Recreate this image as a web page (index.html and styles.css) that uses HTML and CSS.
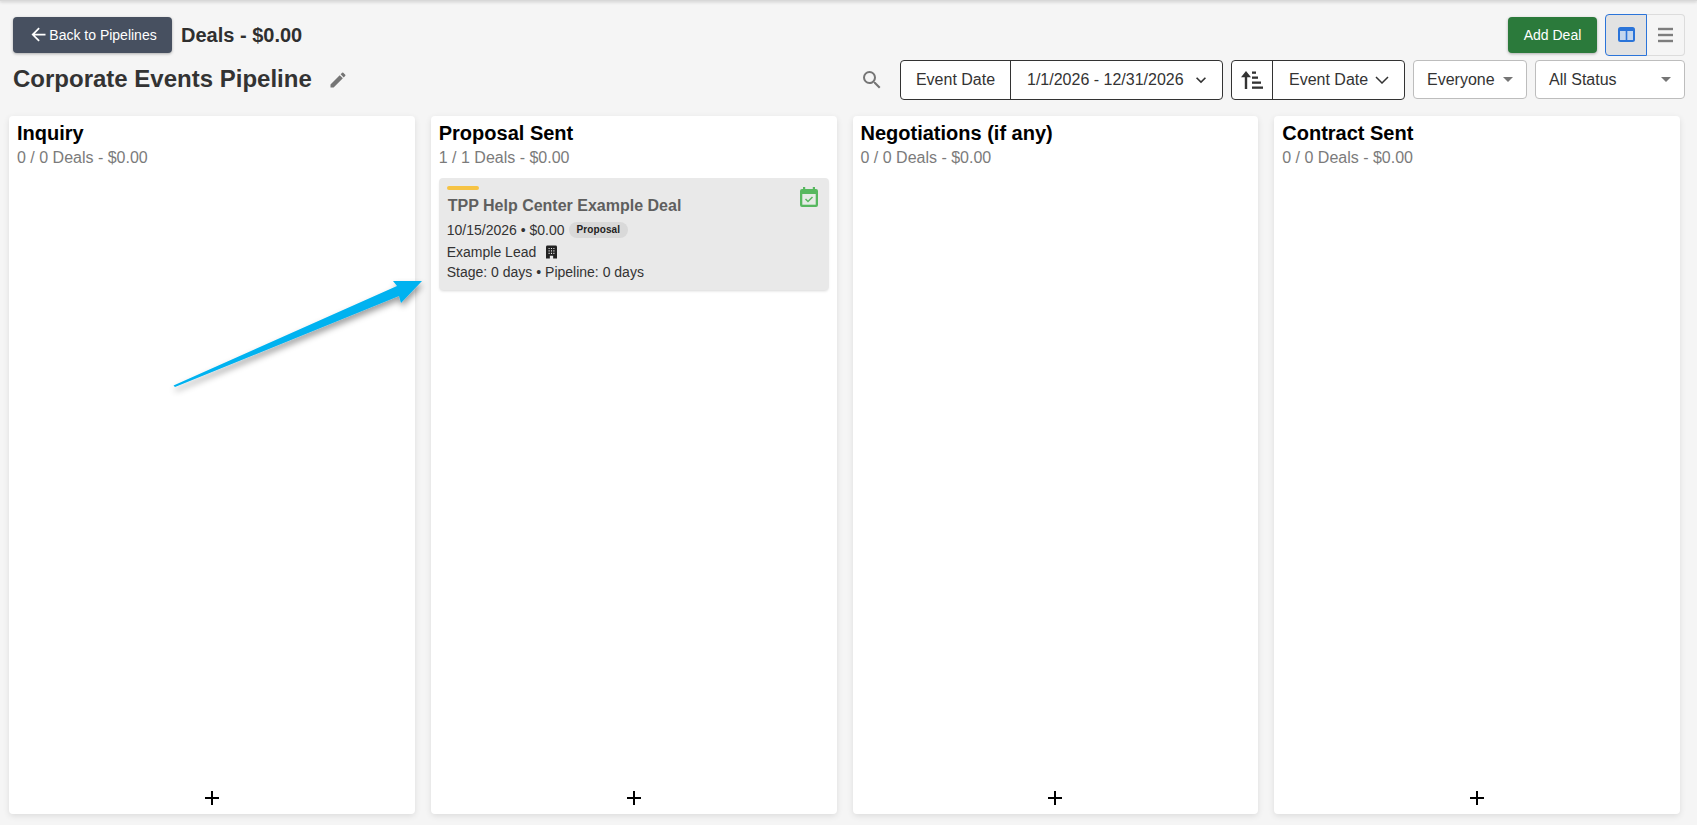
FILE: index.html
```html
<!DOCTYPE html>
<html lang="en">
<head>
<meta charset="utf-8">
<title>Corporate Events Pipeline</title>
<link rel="stylesheet" href="styles.css">
</head>
<body>
<div class="topline"></div>
<header class="header">
  <div class="row row-one">
    <button class="back-btn"><svg class="back-icon" viewBox="0 0 24 24"><path d="M20 11H7.83l5.59-5.59L12 4l-8 8 8 8 1.41-1.41L7.83 13H20v-2z"/></svg>Back to Pipelines</button>
    <span class="deals-total">Deals - $0.00</span>
    <div class="spacer"></div>
    <button class="add-btn">Add Deal</button>
    <div class="toggle">
      <button class="toggle-btn active"><svg viewBox="0 0 17 15" class="ic-board"><rect class="board-frame" width="17" height="15" rx="2.500"/><rect class="board-pane" x="2" y="4" width="5.700" height="9"/><rect class="board-pane" x="9.300" y="4" width="5.700" height="9"/></svg></button>
      <button class="toggle-btn"><svg viewBox="0 0 15 14" class="ic-menu"><rect y="-0.200" width="15" height="2.400"/><rect y="5.800" width="15" height="2.400"/><rect y="11.800" width="15" height="2.400"/></svg></button>
    </div>
  </div>
  <div class="row row-two">
    <h1 class="title">Corporate Events Pipeline</h1>
    <svg class="edit-icon" viewBox="0 0 24 24"><path d="M3 17.25V21h3.75L17.81 9.94l-3.75-3.75L3 17.25zM20.71 7.04a1 1 0 0 0 0-1.41l-2.34-2.34a1 1 0 0 0-1.41 0l-1.83 1.83 3.75 3.75 1.83-1.83z"/></svg>
    <div class="spacer"></div>
    <svg class="search-icon" viewBox="0 0 24 24"><path d="M15.5 14h-.79l-.28-.27A6.47 6.47 0 0 0 16 9.5 6.5 6.5 0 1 0 9.5 16c1.61 0 3.09-.59 4.23-1.57l.27.28v.79l5 4.99L20.49 19l-4.99-5zm-6 0C7.01 14 5 11.99 5 9.5S7.01 5 9.5 5 14 7.01 14 9.5 11.99 14 9.5 14z"/></svg>
    <div class="group date-group">
      <div class="cell cell-label">Event Date</div>
      <div class="cell cell-range">1/1/2026 - 12/31/2026<svg class="chev-small" viewBox="0 0 24 24"><path d="M7.41 8.59 12 13.17l4.59-4.58L18 10l-6 6-6-6z"/></svg></div>
    </div>
    <div class="group sort-group">
      <div class="cell cell-sort"><svg class="sort-icon" viewBox="0 0 22 18"><path d="M5 0l5 6.200H6.200V18H3.800V6.200H0z"/><rect x="11" y="0.500" width="4" height="2.300"/><rect x="11" y="5.500" width="6" height="2.300"/><rect x="11" y="10.500" width="9" height="2.300"/><rect x="11" y="15.500" width="11" height="2.300"/></svg></div>
      <div class="cell cell-sortby">Event Date<svg class="chev-big" viewBox="0 0 14 8"><path class="chev-line" d="M1 1l6 6 6-6"/></svg></div>
    </div>
    <div class="select select-owner">Everyone<span class="caret"></span></div>
    <div class="select select-status">All Status<span class="caret"></span></div>
  </div>
</header>
<main class="board">
  <section class="column">
    <h2 class="col-title">Inquiry</h2>
    <p class="col-sub">0 / 0 Deals - $0.00</p>
    <div class="col-body"></div>
    <button class="col-add" aria-label="Add"><svg viewBox="0 0 16 16"><path d="M7 1h2v6h6v2H9v6H7V9H1V7h6z"/></svg></button>
  </section>
  <section class="column">
    <h2 class="col-title">Proposal Sent</h2>
    <p class="col-sub">1 / 1 Deals - $0.00</p>
    <div class="col-body">
      <article class="card">
        <span class="card-bar"></span>
        <svg class="card-cal" viewBox="0 0 18 20"><path d="M3 0h2.200v2h7.600V0H15v2h1a2 2 0 0 1 2 2v14a2 2 0 0 1-2 2H2a2 2 0 0 1-2-2V4a2 2 0 0 1 2-2h1z"/><rect class="cal-inner" x="2.300" y="7" width="13.400" height="10.700"/><path class="cal-check" d="m5.500 12 2.500 2.500 4.500-4.500"/></svg>
        <h3 class="card-title">TPP Help Center Example Deal</h3>
        <div class="card-line card-meta">10/15/2026 • $0.00<span class="pill">Proposal</span></div>
        <div class="card-line card-lead">Example Lead<svg class="bld" viewBox="0 0 12 14"><path fill-rule="evenodd" d="M1.500 0h9A1.500 1.500 0 0 1 12 1.500V14H7.800v-3H4.200v3H0V1.500A1.500 1.500 0 0 1 1.500 0zm1.300 2.500v1.200H4V2.500zm2.600 0v1.200h1.200V2.500zm2.600 0v1.200h1.200V2.500zm-5.200 2.700v1.200H4V5.200zm2.600 0v1.200h1.200V5.200zm2.600 0v1.200h1.200V5.200zm-5.200 2.700v1.200H4V7.900zm2.600 0v1.200h1.200V7.900zm2.600 0v1.200h1.200V7.900z"/></svg></div>
        <div class="card-line card-age">Stage: 0 days • Pipeline: 0 days</div>
      </article>
    </div>
    <button class="col-add" aria-label="Add"><svg viewBox="0 0 16 16"><path d="M7 1h2v6h6v2H9v6H7V9H1V7h6z"/></svg></button>
  </section>
  <section class="column">
    <h2 class="col-title">Negotiations (if any)</h2>
    <p class="col-sub">0 / 0 Deals - $0.00</p>
    <div class="col-body"></div>
    <button class="col-add" aria-label="Add"><svg viewBox="0 0 16 16"><path d="M7 1h2v6h6v2H9v6H7V9H1V7h6z"/></svg></button>
  </section>
  <section class="column">
    <h2 class="col-title">Contract Sent</h2>
    <p class="col-sub">0 / 0 Deals - $0.00</p>
    <div class="col-body"></div>
    <button class="col-add" aria-label="Add"><svg viewBox="0 0 16 16"><path d="M7 1h2v6h6v2H9v6H7V9H1V7h6z"/></svg></button>
  </section>
</main>
<svg class="arrow" viewBox="0 0 260 120">
  <defs><filter id="arrow-shadow" x="-10%" y="-20%" width="120%" height="150%"><feDropShadow dx="1" dy="4" stdDeviation="3" flood-color="#000" flood-opacity="0.4"/></filter></defs>
  <path filter="url(#arrow-shadow)" d="M3.500 110.500 L227 11 L223 6 L252 6 L231 28 L229 21 L5 112 Z"/>
</svg>
</body>
</html>
```

FILE: styles.css
```css
* { box-sizing: border-box; }
html, body { margin: 0; height: 100%; }
body {
  position: relative;
  width: 1697px;
  height: 825px;
  overflow: hidden;
  background: #f5f5f5;
  font-family: "Liberation Sans", Arial, sans-serif;
  color: #333;
}
button { font-family: inherit; }
svg { display: block; }

.topline {
  height: 1px;
  background: #d8d8d8;
  box-shadow: 0 1px 3px rgba(0, 0, 0, 0.3);
}

.header { padding: 13px 12px 0 13px; }
.row { display: flex; align-items: center; }
.row-one { height: 41px; }
.row-two { height: 40px; margin-top: 5px; }
.spacer { flex: 1; }

.back-btn {
  display: flex;
  align-items: center;
  justify-content: center;
  width: 159px;
  height: 36px;
  padding: 0;
  border: 0;
  border-radius: 4px;
  background: #475060;
  color: #fff;
  font-size: 14px;
  box-shadow: 0 1px 3px rgba(0, 0, 0, 0.3);
}
.back-icon { width: 21px; height: 21px; fill: #fff; }
.deals-total { margin-left: 9px; padding-top: 1px; font-size: 20px; font-weight: 700; color: #2f2f2f; }

.add-btn {
  width: 89px;
  height: 36px;
  border: 0;
  border-radius: 4px;
  background: #2b7a3b;
  color: #fff;
  font-size: 14px;
  box-shadow: 0 1px 3px rgba(0, 0, 0, 0.3);
}
.toggle { display: flex; height: 42px; margin-left: 8px; }
.toggle-btn {
  display: flex;
  align-items: center;
  justify-content: center;
  width: 38px;
  height: 42px;
  padding: 0;
  background: transparent;
  border: 1px solid #dcdcdc;
  border-left: 0;
  border-radius: 0 4px 4px 0;
}
.toggle-btn.active {
  width: 42px;
  background: #e2e2e2;
  border: 1px solid #2b74d9;
  border-radius: 4px 0 0 4px;
}
.ic-board { width: 17px; height: 15px; }
.board-frame { fill: #2b74d9; }
.board-pane { fill: #c3d6ee; }
.ic-menu { width: 15px; height: 14px; fill: #7d7d7d; overflow: visible; }

.title { margin: 0 0 2px; font-size: 24px; font-weight: 700; color: #333; }
.edit-icon { width: 20px; height: 20px; margin-left: 16px; fill: #757575; }
.search-icon { width: 24px; height: 24px; margin-right: 16px; fill: #757575; }

.group {
  display: flex;
  height: 40px;
  background: #fff;
  border: 1px solid #333;
  border-radius: 4px;
  font-size: 16px;
  color: #333;
}
.cell { display: flex; align-items: center; height: 100%; }
.date-group { width: 323px; }
.cell-label { justify-content: center; width: 110px; border-right: 1px solid #333; }
.cell-range { flex: 1; padding-left: 16px; }
.chev-small { width: 20px; height: 20px; margin-left: 7px; fill: #333; }
.sort-group { width: 174px; margin-left: 8px; }
.cell-sort { justify-content: center; width: 41px; border-right: 1px solid #333; }
.sort-icon { width: 22px; height: 18px; fill: #333; }
.cell-sortby { flex: 1; padding-left: 16px; }
.chev-big { width: 14px; height: 8px; margin-left: 7px; }
.chev-line { fill: none; stroke: #333; stroke-width: 1.500; }

.select {
  display: flex;
  align-items: center;
  justify-content: space-between;
  height: 39px;
  margin-left: 8px;
  margin-bottom: 1px;
  padding: 0 13px;
  background: #fff;
  border: 1px solid #bdbdbd;
  border-radius: 4px;
  font-size: 16px;
  color: #333;
}
.select-owner { width: 114px; }
.select-status { width: 150px; }
.caret {
  width: 0;
  height: 0;
  border-left: 5px solid transparent;
  border-right: 5px solid transparent;
  border-top: 5px solid #757575;
}

.board {
  display: grid;
  grid-template-columns: repeat(4, 1fr);
  column-gap: 16px;
  height: 698px;
  margin: 16px 17px 0 9px;
}
.column {
  display: flex;
  flex-direction: column;
  background: #fff;
  border-radius: 4px;
  padding: 5px 8px 0;
  box-shadow: 0 2px 6px rgba(0, 0, 0, 0.1);
}
.col-title { margin: 0; font-size: 20px; line-height: 24px; font-weight: 700; color: #000; }
.col-sub { margin: 3px 0 0; font-size: 16px; line-height: 20px; color: #7b7b7b; }
.col-body { flex: 1; padding-top: 10px; }
.col-add {
  display: flex;
  justify-content: center;
  align-items: center;
  width: 100%;
  height: 32px;
  padding: 0;
  border: 0;
  background: transparent;
}
.col-add svg { width: 16px; height: 16px; fill: #000; }

.card {
  position: relative;
  height: 112px;
  padding: 8px 8px 0;
  background: #e9e9e9;
  border-radius: 4px;
  box-shadow: 0 2px 3px -1px rgba(0, 0, 0, 0.16);
}
.card-bar {
  display: block;
  width: 32px;
  height: 4px;
  border-radius: 2px;
  background: #f6c344;
}
.card-cal { position: absolute; top: 9px; right: 11px; width: 18px; height: 20px; fill: #57b85f; }
.cal-inner { fill: #e6ebe6; }
.cal-check { fill: none; stroke: #57b85f; stroke-width: 1.500; }
.card-title { margin: 6px 0 0 1px; font-size: 16px; line-height: 20px; font-weight: 700; color: #5f5f5f; }
.card-line { display: flex; align-items: center; font-size: 14px; line-height: 20px; color: #333; }
.card-meta { margin-top: 4px; }
.pill {
  margin-left: 4px;
  padding: 0 8px;
  height: 16px;
  border-radius: 8px;
  background: #d9d9d9;
  font-size: 10px;
  line-height: 16px;
  font-weight: 700;
  letter-spacing: 0.1px;
  color: #222;
}
.card-lead { margin-top: 2px; }
.bld { width: 11px; height: 14px; margin-left: 10px; fill: #222; }

.arrow {
  position: absolute;
  left: 170px;
  top: 275px;
  width: 260px;
  height: 120px;
  fill: #00b2f0;
  overflow: visible;
}
```
